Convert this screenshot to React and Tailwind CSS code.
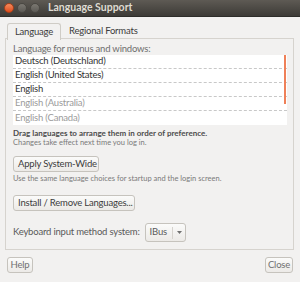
import React from 'react';

const langs = [
  { name: 'Deutsch (Deutschland)', active: true },
  { name: 'English (United States)', active: true },
  { name: 'English', active: true },
  { name: 'English (Australia)', active: false },
  { name: 'English (Canada)', active: false },
];

const Button = ({ children, className = '' }) => (
  <div
    className={`h-[16px] px-[4px] flex items-center whitespace-nowrap rounded-[3px] border border-[#c6c3bd] bg-gradient-to-b from-[#fbfbfa] to-[#eceae7] text-[#3c3c3c] text-[9.5px] tracking-[-0.2px] ${className}`}
  >
    {children}
  </div>
);

const App = () => {
  return (
    <div
      className="w-[300px] h-[282px] bg-[#f2f1f0] flex flex-col overflow-hidden"
      style={{ fontFamily: 'Lato, "DejaVu Sans", sans-serif' }}
    >
      {/* title bar */}
      <div className="h-[17px] shrink-0 flex items-center bg-gradient-to-b from-[#5e5a54] to-[#3d3b37] border-b border-[#2e2d2a]">
        <div className="flex items-center gap-[2px] pl-[4px]">
          <div className="w-[10px] h-[10px] rounded-full bg-gradient-to-b from-[#f38a5c] to-[#df4a16] border border-[#a8401a]" />
          <div className="w-[10px] h-[10px] rounded-full bg-gradient-to-b from-[#7b7872] to-[#5c5a55] border border-[#4a4843] ml-[1px]" />
          <div className="w-[10px] h-[10px] rounded-full bg-gradient-to-b from-[#7b7872] to-[#5c5a55] border border-[#4a4843] ml-[1px]" />
        </div>
        <div className="ml-[8px] text-[10.5px] font-bold text-[#dfdbd2]">Language Support</div>
      </div>

      {/* tabs */}
      <div className="flex px-[7px] mt-[6px] h-[16px] items-end text-[9.5px] tracking-[-0.2px] text-[#3c3c3c]">
        <div className="h-[17px] w-[54px] border border-b-0 border-[#cfccc6] rounded-t-[3px] bg-[#f2f1f0] flex items-center justify-center relative z-10 translate-y-[1px]">
          Language
        </div>
        <div className="ml-[8px] h-[16px] flex items-center">Regional Formats</div>
      </div>

      {/* panel */}
      <div className="mx-[5px] mt-[-1px] w-[289px] h-[212px] shrink-0 border border-[#d6d3ce] px-[7px] pt-[4px]">
        <div className="text-[9.5px] tracking-[-0.2px] leading-[12px] text-[#6e6e6e]">Language for menus and windows:</div>
        <div className="bg-white w-[274px] relative">
          {langs.map((l, i) => (
            <div
              key={l.name}
              className={`h-[14px] flex items-center pl-[2px] text-[9.5px] tracking-[-0.2px] ${
                l.active ? 'text-[#333333]' : 'text-[#9b9b9b]'
              } ${i < langs.length - 1 ? 'border-b border-dashed border-[#c8c8c8]' : ''}`}
            >
              {l.name}
            </div>
          ))}
          <div className="absolute right-[1px] top-0 w-[2px] h-[49px] bg-[#ef8058]" />
        </div>
        <div className="mt-[3px] text-[8px] leading-[10px] font-bold text-[#4c4c4c]">
          Drag languages to arrange them in order of preference.
        </div>
        <div className="text-[7.5px] leading-[10px] text-[#7a7a7a]">Changes take effect next time you log in.</div>
        <Button className="mt-[8px] w-[86px]">Apply System-Wide</Button>
        <div className="mt-[2px] text-[7.5px] leading-[10px] text-[#7a7a7a]">
          Use the same language choices for startup and the login screen.
        </div>
        <Button className="mt-[11px] w-[122px]">Install / Remove Languages...</Button>
        <div className="mt-[12px] flex items-center">
          <div className="text-[9.5px] tracking-[-0.2px] text-[#5a5a5a]">Keyboard input method system:</div>
          <div className="ml-[5px] h-[19px] w-[41px] flex items-center rounded-[3px] border border-[#c6c3bd] bg-gradient-to-b from-[#fbfbfa] to-[#eceae7]">
            <span className="pl-[4px] text-[9.5px] tracking-[-0.2px] text-[#5a5a5a]">IBus</span>
            <div className="ml-[5px] h-[12px] border-l border-[#d6d3ce]" />
            <svg width="5" height="3" viewBox="0 0 5 3" className="ml-[4px]">
              <path d="M0 0 L5 0 L2.5 3 Z" fill="#707070" />
            </svg>
          </div>
        </div>
      </div>

      {/* footer */}
      <div className="flex justify-between px-[7px] mt-[7px]">
        <Button className="w-[26px] justify-center text-[#707070]">Help</Button>
        <Button className="w-[28px] justify-center text-[#707070]">Close</Button>
      </div>
    </div>
  );
};

export default App;
